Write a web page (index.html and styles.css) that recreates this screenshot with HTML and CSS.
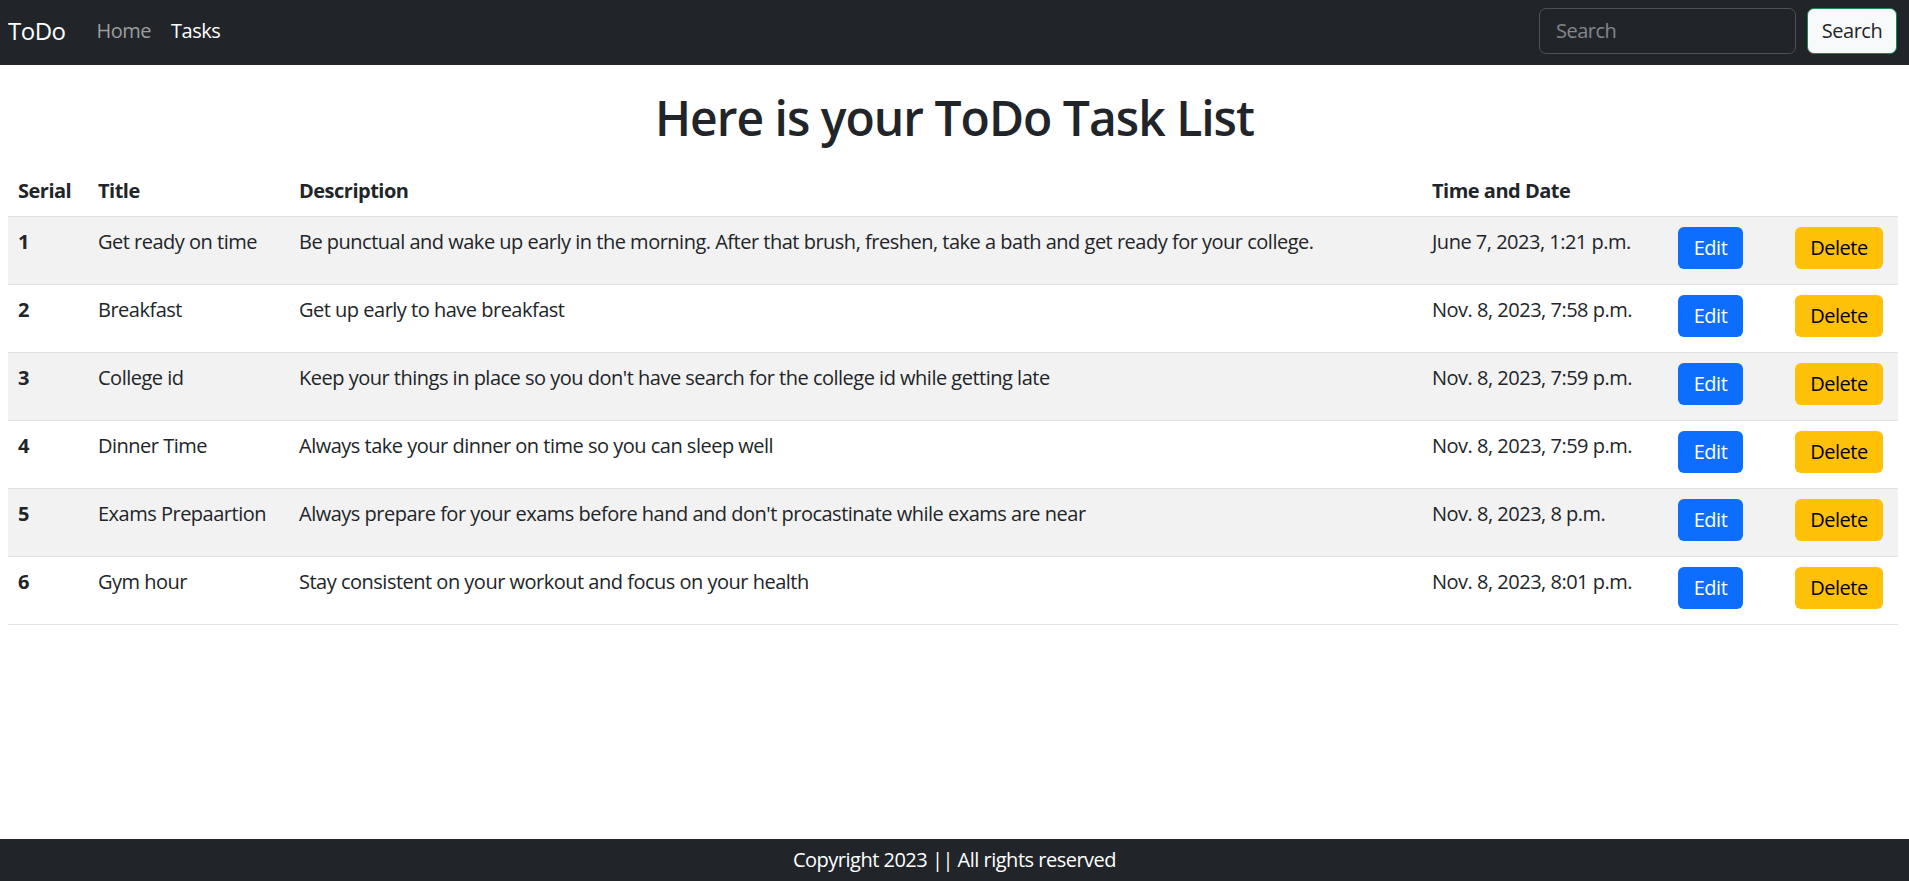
FILE: index.html
```html
<!DOCTYPE html>
<html lang="en">
<head>
<meta charset="utf-8">
<title>ToDo</title>
<link rel="stylesheet" href="styles.css">
</head>
<body>
<nav class="navbar">
  <a class="brand" href="#">ToDo</a>
  <ul class="nav-links">
    <li><a class="nav-link" href="#">Home</a></li>
    <li><a class="nav-link active" href="#">Tasks</a></li>
  </ul>
  <form class="search-form">
    <input class="search-input" type="search" placeholder="Search">
    <button class="search-btn" type="button">Search</button>
  </form>
</nav>
<main class="content">
  <h1 class="page-title">Here is your ToDo Task List</h1>
  <table class="task-table">
    <colgroup>
      <col class="col-serial"><col class="col-title"><col class="col-desc"><col class="col-time"><col class="col-edit"><col class="col-delete">
    </colgroup>
    <thead>
      <tr><th>Serial</th><th>Title</th><th>Description</th><th>Time and Date</th><th></th><th></th></tr>
    </thead>
    <tbody>
      <tr><th>1</th><td>Get ready on time</td><td>Be punctual and wake up early in the morning. After that brush, freshen, take a bath and get ready for your college.</td><td>June 7, 2023, 1:21 p.m.</td><td><a class="btn btn-edit" href="#">Edit</a></td><td><a class="btn btn-delete" href="#">Delete</a></td></tr>
      <tr><th>2</th><td>Breakfast</td><td>Get up early to have breakfast</td><td>Nov. 8, 2023, 7:58 p.m.</td><td><a class="btn btn-edit" href="#">Edit</a></td><td><a class="btn btn-delete" href="#">Delete</a></td></tr>
      <tr><th>3</th><td>College id</td><td>Keep your things in place so you don't have search for the college id while getting late</td><td>Nov. 8, 2023, 7:59 p.m.</td><td><a class="btn btn-edit" href="#">Edit</a></td><td><a class="btn btn-delete" href="#">Delete</a></td></tr>
      <tr><th>4</th><td>Dinner Time</td><td>Always take your dinner on time so you can sleep well</td><td>Nov. 8, 2023, 7:59 p.m.</td><td><a class="btn btn-edit" href="#">Edit</a></td><td><a class="btn btn-delete" href="#">Delete</a></td></tr>
      <tr><th>5</th><td>Exams Prepaartion</td><td>Always prepare for your exams before hand and don't procastinate while exams are near</td><td>Nov. 8, 2023, 8 p.m.</td><td><a class="btn btn-edit" href="#">Edit</a></td><td><a class="btn btn-delete" href="#">Delete</a></td></tr>
      <tr><th>6</th><td>Gym hour</td><td>Stay consistent on your workout and focus on your health</td><td>Nov. 8, 2023, 8:01 p.m.</td><td><a class="btn btn-edit" href="#">Edit</a></td><td><a class="btn btn-delete" href="#">Delete</a></td></tr>
    </tbody>
  </table>
</main>
<footer class="footer">Copyright 2023 || All rights reserved</footer>
</body>
</html>
```
FILE: styles.css
```css
* { box-sizing: border-box; }
html, body { height: 100%; }
body {
  margin: 0;
  font-family: "Open Sans", "Noto Sans", sans-serif;
  font-size: 20px;
  line-height: 30px;
  letter-spacing: -0.5px;
  color: #212529;
  background: #fff;
  display: flex;
  flex-direction: column;
  min-height: 100vh;
}
a { text-decoration: none; }

.navbar {
  height: 65px;
  flex: 0 0 65px;
  background: #212529;
  display: flex;
  align-items: center;
  padding: 0 12px 4px 8px;
}
.brand {
  color: #fff;
  font-size: 24px;
  line-height: 38px;
  margin-right: 21px;
}
.nav-links {
  list-style: none;
  margin: 0;
  padding: 0;
  display: flex;
}
.nav-link {
  display: block;
  padding: 0 10px;
  color: #9b9d9f;
  font-size: 20px;
}
.nav-link.active { color: #fff; }
.search-form {
  margin-left: auto;
  display: flex;
  gap: 11px;
}
.search-input {
  width: 257px;
  height: 46px;
  background: #212529;
  border: 1px solid #4d5257;
  border-radius: 7px;
  padding: 0 16px;
  font: inherit;
  letter-spacing: -0.5px;
  color: #fff;
}
.search-input::placeholder { color: #81878d; }
.search-btn {
  width: 90px;
  height: 46px;
  background: #f8f9fa;
  border: 1px solid #198754;
  border-radius: 7px;
  font: inherit;
  letter-spacing: -0.5px;
  color: #212529;
  padding: 0;
}

.content { flex: 1; }
.page-title {
  text-align: center;
  font-size: 48px;
  line-height: 60px;
  font-weight: 600;
  letter-spacing: -1px;
  margin: 23px 0 18px;
}
.task-table {
  margin-left: 8px;
  width: 1890px;
  border-collapse: collapse;
  table-layout: fixed;
}
.col-serial { width: 80px; }
.col-title { width: 201px; }
.col-desc { width: 1133px; }
.col-time { width: 246px; }
.col-edit { width: 117px; }
.col-delete { width: 113px; }
.task-table th, .task-table td {
  text-align: left;
  vertical-align: top;
  padding: 10px 10px 10px;
  border-bottom: 1px solid #dee2e6;
}
.task-table th { font-weight: 700; }
.task-table tbody td, .task-table tbody th { padding-bottom: 15px; }
.task-table tbody tr:nth-child(odd) { background: #f2f2f2; }

.btn {
  display: inline-block;
  height: 42px;
  line-height: 40px;
  border: 1px solid transparent;
  border-radius: 6px;
  text-align: center;
  font-size: 20px;
  vertical-align: top;
}
.btn-edit { width: 65px; background: #0d6efd; color: #fff; }
.btn-delete { width: 88px; background: #ffc107; color: #000; }

.footer {
  background: #212529;
  color: #fff;
  text-align: center;
  height: 42px;
  line-height: 42px;
  flex: 0 0 42px;
}
```
